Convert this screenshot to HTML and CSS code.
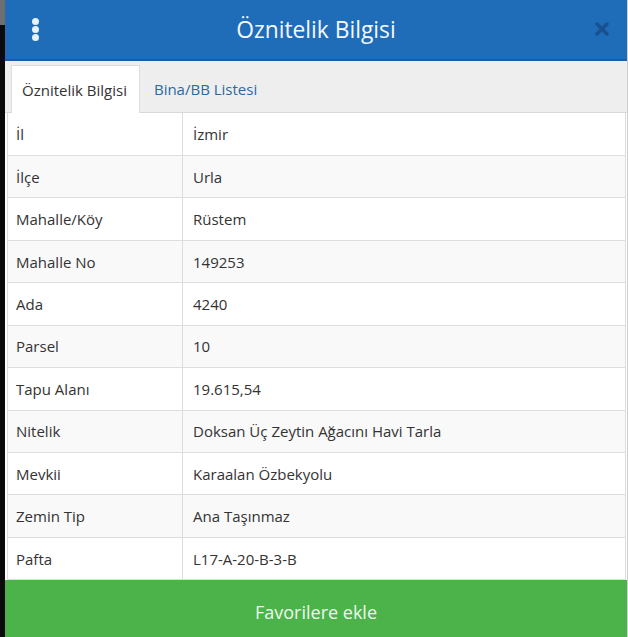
FILE: index.html
```html
<!DOCTYPE html>
<html lang="tr">
<head>
<meta charset="utf-8">
<title>Öznitelik Bilgisi</title>
<link rel="stylesheet" href="styles.css">
</head>
<body>
<div class="page">
  <div class="edge"></div>
  <div class="panel">
    <header class="header">
      <span class="kebab"><i></i><i></i><i></i></span>
      <h1 class="title">Öznitelik Bilgisi</h1>
      <svg class="close" width="14" height="14" viewBox="0 0 14 14"><path d="M2 2 L12 12 M12 2 L2 12" stroke="currentColor" stroke-width="3.4" stroke-linecap="round"/></svg>
    </header>
    <nav class="tabs">
      <span class="tab active">Öznitelik Bilgisi</span>
      <span class="tab">Bina/BB Listesi</span>
    </nav>
    <table class="attrs">
      <tr><td class="k">İl</td><td>İzmir</td></tr>
      <tr><td class="k">İlçe</td><td>Urla</td></tr>
      <tr><td class="k">Mahalle/Köy</td><td>Rüstem</td></tr>
      <tr><td class="k">Mahalle No</td><td>149253</td></tr>
      <tr><td class="k">Ada</td><td>4240</td></tr>
      <tr><td class="k">Parsel</td><td>10</td></tr>
      <tr><td class="k">Tapu Alanı</td><td>19.615,54</td></tr>
      <tr><td class="k">Nitelik</td><td>Doksan Üç Zeytin Ağacını Havi Tarla</td></tr>
      <tr><td class="k">Mevkii</td><td>Karaalan Özbekyolu</td></tr>
      <tr><td class="k">Zemin Tip</td><td>Ana Taşınmaz</td></tr>
      <tr><td class="k">Pafta</td><td>L17-A-20-B-3-B</td></tr>
    </table>
    <button class="fav">Favorilere ekle</button>
  </div>
</div>
</body>
</html>
```
FILE: styles.css
```css
html, body {
  margin: 0;
  padding: 0;
  background: #000;
  height: 100%;
  overflow: hidden;
}
.page {
  display: flex;
  height: 637px;
  font-family: "Open Sans", "Noto Sans", sans-serif;
}
.edge {
  width: 5px;
  flex: none;
  background: linear-gradient(#6e6e6e 0, #6e6e6e 25px, #0a0a0a 25px);
}
.panel {
  flex: 1;
  display: flex;
  flex-direction: column;
  background: #fff;
  border-right: 1px solid #cfcfcf;
}
.header {
  height: 59px;
  background: #1f6cb9;
  border-bottom: 2px solid #1a5ea3;
  display: flex;
  align-items: center;
  position: relative;
  justify-content: center;
}
.kebab {
  position: absolute;
  left: 27px;
  top: 18px;
  display: flex;
  flex-direction: column;
  gap: 1px;
}
.kebab i {
  display: block;
  width: 7px;
  height: 7px;
  border-radius: 50%;
  background: #e9f1fa;
}
.title {
  margin: 0;
  font-size: 22.8px;
  font-weight: 400;
  color: #f4f8fc;
}
.close {
  position: absolute;
  right: 18px;
  top: 22px;
  color: #185190;
}
.tabs {
  height: 47px;
  padding-top: 4px;
  padding-left: 6px;
  background: #eeeeee;
  border-bottom: 1px solid #d9d9d9;
  display: flex;
  align-items: stretch;
}
.tab {
  display: flex;
  align-items: center;
  padding: 0 12px 0 10px;
  font-size: 15px;
  color: #2a6aa0;
  border: 1px solid transparent;
  border-bottom: none;
}
.tab.active {
  background: #fff;
  color: #333;
  border-color: #dddddd;
  margin-bottom: -1px;
  padding-right: 12px;
}
.tab + .tab {
  padding-left: 13px;
}
.attrs {
  margin: 0 1px 0 2px;
  border-collapse: collapse;
  font-size: 15px;
  color: #333;
  width: calc(100% - 3px);
}
.attrs tr {
  height: 42.45px;
}
.attrs tr:nth-child(even) td {
  background: #f9f9f9;
}
.attrs td {
  border: 1px solid #dddddd;
  padding: 0 8px;
  vertical-align: middle;
}
.attrs tr:first-child td {
  border-top: none;
}
.attrs td.k {
  width: 158px;
}
.attrs td + td {
  padding-left: 10px;
}
.fav {
  flex: 1;
  border: none;
  background: #4bb34a;
  color: #eef8ee;
  font-family: "Open Sans", "Noto Sans", sans-serif;
  font-size: 18px;
  padding: 6px 0 0;
  margin: 0;
}
```
